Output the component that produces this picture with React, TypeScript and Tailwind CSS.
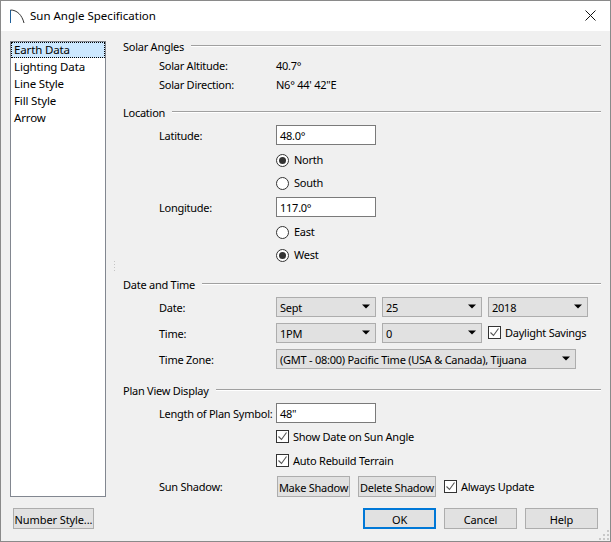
import React from "react";

function Header({ text }: { text: string }) {
  return (
    <div className="flex h-[18px] items-center">
      <span className="whitespace-nowrap pb-[2px]">{text}</span>
      <div className="mb-[3px] ml-[7px] h-[2px] flex-1 border-t border-b border-t-[#a0a0a0] border-b-white" />
    </div>
  );
}

function Row({ label, h, mt, low, children }: { label?: string; h: string; mt?: string; low?: boolean; children?: React.ReactNode }) {
  return (
    <div className={`flex items-center pl-[36px] ${h} ${mt ?? ""}`}>
      <div className={`w-[117px] shrink-0 whitespace-nowrap ${low ? "pt-[1px]" : "pb-[1px]"}`}>{label}</div>
      {children}
    </div>
  );
}

function Input({ value }: { value: string }) {
  return (
    <div className="flex h-[20px] w-[100px] items-center border border-[#7a7a7a] bg-white pl-[3px] pt-[1px]">{value}</div>
  );
}

function Select({ value, w }: { value: string; w: string }) {
  return (
    <div className={`flex h-[20px] items-center justify-between border border-[#adadad] bg-[#e1e1e1] pl-[3px] pr-[5px] ${w}`}>
      <span className="whitespace-nowrap pt-[1px]">{value}</span>
      <svg className="mb-[1px]" width="8" height="5" viewBox="0 0 8 5"><path d="M0 0.5h8L4 4.5z" fill="#000" /></svg>
    </div>
  );
}

function Radio({ label, on }: { label: string; on?: boolean }) {
  return (
    <div className="flex items-center gap-[5px] pb-[1px]">
      <div className="flex h-[13px] w-[13px] items-center justify-center rounded-full border border-[#333] bg-white">
        {on && <div className="h-[7px] w-[7px] rounded-full bg-[#333]" />}
      </div>
      <span className="pb-[2px]">{label}</span>
    </div>
  );
}

function Check({ label }: { label: string }) {
  return (
    <div className="flex items-center gap-[4px] whitespace-nowrap pb-[1px]">
      <div className="flex h-[13px] w-[13px] items-center justify-center border border-[#333] bg-white">
        <svg width="11" height="11" viewBox="0 0 11 11" fill="none"><path d="M1.5 5.5l3 3 5-7" stroke="#555" strokeWidth="1.1" /></svg>
      </div>
      <span>{label}</span>
    </div>
  );
}

function Button({ text, w, primary }: { text: string; w: string; primary?: boolean }) {
  return (
    <div className={`flex h-[21px] items-center justify-center whitespace-nowrap bg-[#e1e1e1] pt-[1px] ${w} ${primary ? "border-2 border-[#0078d7]" : "border border-[#adadad]"}`}>
      {text}
    </div>
  );
}

export default function App() {
  return (
    <div className="flex h-[542px] w-[611px] flex-col overflow-hidden border border-[#8a8a8a] bg-[#f0f0f0] text-[11.5px] leading-none text-black [font-family:'Noto_Sans',sans-serif]">
      <div className="flex h-[30px] items-center bg-white pl-[8px] pr-[13px]">
        <svg width="16" height="16" viewBox="0 0 16 16" fill="none">
          <path d="M1.5 15V2" stroke="#1f5f99" strokeWidth="1" />
          <path d="M1.5 2C8 2 13 7 15 15" stroke="#333" strokeWidth="1" />
        </svg>
        <span className="ml-[5px] flex-1">Sun Angle Specification</span>
        <svg className="mb-[2px]" width="13" height="13" viewBox="0 0 13 13" fill="none"><path d="M1.5 1.5l10 10M11.5 1.5l-10 10" stroke="#111" strokeWidth="1" /></svg>
      </div>

      <div className="flex h-[466px]">
        <div className="ml-[9px] mt-[10px] h-[456px] w-[96px] border border-[#828790] bg-white tracking-[-0.15px]">
          <div className="flex h-[16px] items-center border border-dotted border-black bg-[#cce8ff] pl-[2px]">Earth Data</div>
          {["Lighting Data", "Line Style", "Fill Style", "Arrow"].map((t) => (
            <div key={t} className="flex h-[17px] items-center pl-[3px]">{t}</div>
          ))}
        </div>

        <div className="flex w-[17px] items-center justify-center">
          <svg width="3" height="12" viewBox="0 0 3 12" className="mt-[6px]">
            <path d="M1 0h1v1H1zM1 3h1v1H1zM1 6h1v1H1zM1 9h1v1H1z" fill="#c4c4c4" />
          </svg>
        </div>

        <div className="w-[478px] pt-[7px] text-[11px] tracking-[-0.25px]">
          <Header text="Solar Angles" />
          <Row label="Solar Altitude:" h="h-[19px]" mt="mt-[0px]"><span className="pb-[1px]">40.7°</span></Row>
          <Row label="Solar Direction:" h="h-[19px]"><span className="pb-[1px]">N6° 44' 42"E</span></Row>

          <div className="mt-[10px]"><Header text="Location" /></div>
          <Row label="Latitude:" low h="h-[20px]" mt="mt-[3px]"><Input value="48.0°" /></Row>
          <Row h="h-[23px]" mt="mt-[4px]"><Radio label="North" on /></Row>
          <Row h="h-[23px]"><Radio label="South" /></Row>
          <Row label="Longitude:" low h="h-[20px]" mt="mt-[2px]"><Input value="117.0°" /></Row>
          <Row h="h-[23px]" mt="mt-[4px]"><Radio label="East" /></Row>
          <Row h="h-[23px]"><Radio label="West" on /></Row>

          <div className="mt-[9px]"><Header text="Date and Time" /></div>
          <Row label="Date:" low h="h-[20px]" mt="mt-[3px]">
            <div className="flex gap-[6px]">
              <Select value="Sept" w="w-[100px]" />
              <Select value="25" w="w-[100px]" />
              <Select value="2018" w="w-[100px]" />
            </div>
          </Row>
          <Row label="Time:" low h="h-[20px]" mt="mt-[6px]">
            <div className="flex items-center gap-[6px]">
              <Select value="1PM" w="w-[100px]" />
              <Select value="0" w="w-[100px]" />
              <Check label="Daylight Savings" />
            </div>
          </Row>
          <Row label="Time Zone:" low h="h-[20px]" mt="mt-[6px]">
            <Select value="(GMT - 08:00) Pacific Time (USA & Canada), Tijuana" w="w-[300px]" />
          </Row>

          <div className="mt-[13px]"><Header text="Plan View Display" /></div>
          <Row label="Length of Plan Symbol:" low h="h-[20px]" mt="mt-[3px]"><Input value={'48"'} /></Row>
          <Row h="h-[24px]" mt="mt-[2px]"><Check label="Show Date on Sun Angle" /></Row>
          <Row h="h-[24px]"><Check label="Auto Rebuild Terrain" /></Row>
          <Row label="Sun Shadow:" h="h-[21px]" mt="mt-[3px]">
            <div className="ml-[1px] flex items-center gap-[8px]">
              <Button text="Make Shadow" w="w-[73px]" />
              <Button text="Delete Shadow" w="w-[78px]" />
              <Check label="Always Update" />
            </div>
          </Row>
        </div>
      </div>

      <div className="mt-[11px] flex pl-[12px] text-[11px] tracking-[-0.1px]">
        <Button text="Number Style..." w="w-[81px]" />
        <div className="ml-[269px] flex gap-[8px]">
          <Button text="OK" w="w-[73px]" primary />
          <Button text="Cancel" w="w-[73px]" />
          <Button text="Help" w="w-[73px]" />
        </div>
      </div>
      <div className="flex justify-end pr-[1px] pt-[1px]">
        <svg width="10" height="10" viewBox="0 0 10 10">
          <path d="M8 0h2v2H8zM4 4h2v2H4zM8 4h2v2H8zM0 8h2v2H0zM4 8h2v2H4zM8 8h2v2H8z" fill="#c8c8c8" />
        </svg>
      </div>
    </div>
  );
}
